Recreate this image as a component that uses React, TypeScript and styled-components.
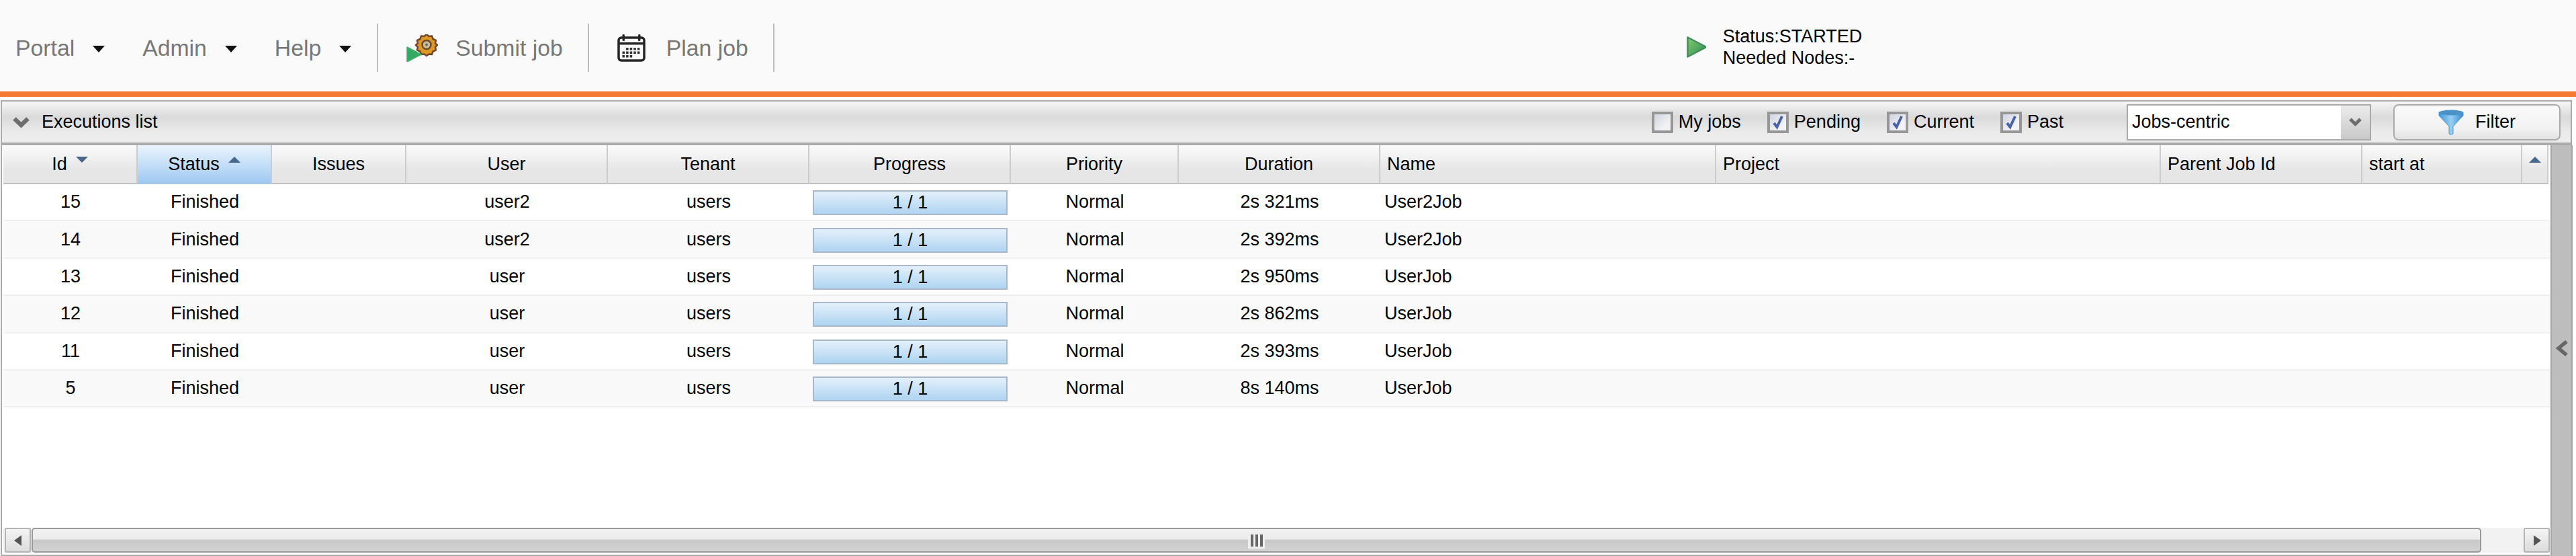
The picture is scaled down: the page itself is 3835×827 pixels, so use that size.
import { FC } from "react";
import styled, { createGlobalStyle } from "styled-components";

const GRID_COLUMNS = "200px 200px 200px 300px 300px 300px 250px 300px 500px 662px 300px 238px 39px";

const GlobalStyle = createGlobalStyle`
    html, body {
        margin: 0;
        padding: 0;
        background: #fff;
    }
    * {
        box-sizing: border-box;
    }
`;

type Job = { id: number; user: string; duration: string; name: string };

const jobs: Job[] = [
    { id: 15, user: "user2", duration: "2s 321ms", name: "User2Job" },
    { id: 14, user: "user2", duration: "2s 392ms", name: "User2Job" },
    { id: 13, user: "user", duration: "2s 950ms", name: "UserJob" },
    { id: 12, user: "user", duration: "2s 862ms", name: "UserJob" },
    { id: 11, user: "user", duration: "2s 393ms", name: "UserJob" },
    { id: 5, user: "user", duration: "8s 140ms", name: "UserJob" },
];

const PlayIcon: FC<{ width: number; height: number; id: string }> = ({ width, height, id }) => (
    <svg width={width} height={height} viewBox="0 0 29 32">
        <defs>
            <linearGradient id={id} x1="0" y1="0" x2="1" y2="1">
                <stop offset="0" stopColor="#86c873" />
                <stop offset="1" stopColor="#2a8f4e" />
            </linearGradient>
        </defs>
        <path d="M1.5 1.5 L27.5 15 Q28.5 16 27.5 17 L1.5 30.5 Z" fill={`url(#${id})`} stroke="#3f9058" strokeWidth="2.5" strokeLinejoin="round" />
    </svg>
);

const SubmitIcon: FC = () => (
    <svg width="47" height="41" viewBox="0 0 47 41">
        <path
            d="M30 0 L33.5 3 L38 2.5 L39.5 7 L44 9 L43 13.5 L46 16 L43 19 L44 23.5 L39.5 25.5 L38 30 L33.5 29.5 L30 32 L26.5 29.5 L22 30 L20.5 25.5 L16 23.5 L17 19 L14 16 L17 13.5 L16 9 L20.5 7 L22 2.5 L26.5 3 Z"
            fill="#dc9a22"
            stroke="#74452f"
            strokeWidth="2.5"
            strokeLinejoin="round"
        />
        <circle cx="30" cy="15.5" r="6.5" fill="#cdbd96" stroke="#6c4a34" strokeWidth="2.5" />
        <circle cx="30" cy="15.5" r="2" fill="#6f6a66" />
        <path d="M1 19 L22 30 L1 41 Z" fill="#35a862" stroke="#43b06e" strokeWidth="1.5" strokeLinejoin="round" />
    </svg>
);

const CalendarIcon: FC = () => (
    <svg width="42" height="41" viewBox="0 0 42 41">
        <rect x="2" y="5" width="38" height="34" rx="4" fill="#fafafa" stroke="#262626" strokeWidth="3.5" />
        <rect x="2" y="12" width="38" height="3.5" fill="#262626" />
        <rect x="7.5" y="0" width="3.5" height="10" rx="1.5" fill="#262626" />
        <rect x="31" y="0" width="3.5" height="10" rx="1.5" fill="#262626" />
        {[0, 1, 2].map(r =>
            [0, 1, 2, 3, 4].map(c =>
                r === 0 && c === 0 || r === 2 && c > 2 ? null : (
                    <rect key={`${r}-${c}`} x={7.5 + c * 5.6} y={20 + r * 5.5} width="3.5" height="3.5" fill="#333" />
                )
            )
        )}
    </svg>
);

const FunnelIcon: FC = () => (
    <svg width="38" height="38" viewBox="0 0 38 38">
        <defs>
            <linearGradient id="funnel" x1="0" y1="0" x2="1" y2="0">
                <stop offset="0" stopColor="#3f97d8" />
                <stop offset="0.5" stopColor="#97cff3" />
                <stop offset="1" stopColor="#3488cc" />
            </linearGradient>
        </defs>
        <path d="M1 4 L37 4 L37 9 L22 25 L22 36 Q19 39 16 36 L16 25 L1 9 Z" fill="url(#funnel)" stroke="#4c9bd4" strokeWidth="1" strokeLinejoin="round" />
        <ellipse cx="19" cy="4.5" rx="18" ry="4" fill="#4a93c8" />
    </svg>
);

const Chevron: FC<{ width: number; height: number }> = ({ width, height }) => (
    <svg width={width} height={height} viewBox="0 0 25 16">
        <path d="M2.5 2.5 L12.5 12 L22.5 2.5" fill="none" stroke="#6e6e6e" strokeWidth="6.5" />
    </svg>
);

const Caret: FC = () => (
    <svg width="18" height="10" viewBox="0 0 18 10">
        <path d="M0 0 H18 L9 10 Z" fill="#111" />
    </svg>
);

const SortArrow: FC<{ up?: boolean }> = ({ up }) => (
    <SortMark width="18" height="9" viewBox="0 0 18 9">
        <path d={up ? "M0 9 H18 L9 0 Z" : "M0 0 H18 L9 9 Z"} fill="#47688a" />
    </SortMark>
);

const FilterCheck: FC<{ label: string; checked?: boolean }> = ({ label, checked }) => (
    <CheckLabel>
        <CheckBox>
            {checked && (
                <svg width="18" height="22" viewBox="0 0 18 22">
                    <path d="M3 12 L7.5 18 L15 2" fill="none" stroke="#4a62a8" strokeWidth="4" />
                </svg>
            )}
        </CheckBox>
        {label}
    </CheckLabel>
);

export default function App() {
    return (
        <Page>
            <GlobalStyle />
            <Toolbar>
                <MenuItem>Portal<Caret /></MenuItem>
                <MenuItem>Admin<Caret /></MenuItem>
                <MenuItem>Help<Caret /></MenuItem>
                <Separator />
                <ToolButton $gap={26}><SubmitIcon />Submit job</ToolButton>
                <Separator />
                <ToolButton $gap={31}><CalendarIcon />Plan job</ToolButton>
                <Separator />
                <StatusBlock>
                    <PlayIcon width={29} height={32} id="statusPlay" />
                    <StatusText>
                        <div>Status:STARTED</div>
                        <div>Needed Nodes:-</div>
                    </StatusText>
                </StatusBlock>
            </Toolbar>
            <OrangeBar />
            <Panel>
                <PanelHeader>
                    <Chevron width={25} height={16} />
                    <PanelTitle>Executions list</PanelTitle>
                    <FilterGroup>
                        <FilterCheck label="My jobs" />
                        <FilterCheck label="Pending" checked />
                        <FilterCheck label="Current" checked />
                        <FilterCheck label="Past" checked />
                    </FilterGroup>
                    <Combo>
                        <ComboValue>Jobs-centric</ComboValue>
                        <ComboButton><Chevron width={19} height={13} /></ComboButton>
                    </Combo>
                    <FilterButton><FunnelIcon />Filter</FilterButton>
                </PanelHeader>
                <PanelBody>
                    <Grid>
                        <HeaderRow>
                            <HeaderCell>Id<SortArrow /></HeaderCell>
                            <HeaderCell $sorted>Status<SortArrow up /></HeaderCell>
                            <HeaderCell>Issues</HeaderCell>
                            <HeaderCell>User</HeaderCell>
                            <HeaderCell>Tenant</HeaderCell>
                            <HeaderCell>Progress</HeaderCell>
                            <HeaderCell>Priority</HeaderCell>
                            <HeaderCell>Duration</HeaderCell>
                            <HeaderCell $left>Name</HeaderCell>
                            <HeaderCell $left>Project</HeaderCell>
                            <HeaderCell $left>Parent Job Id</HeaderCell>
                            <HeaderCell $left>start at</HeaderCell>
                            <HeaderCell><SortArrow up /></HeaderCell>
                        </HeaderRow>
                        {jobs.map((job, index) => (
                            <Row key={job.id} $odd={index % 2 === 1}>
                                <Cell>{job.id}</Cell>
                                <Cell>Finished</Cell>
                                <Cell />
                                <Cell>{job.user}</Cell>
                                <Cell>users</Cell>
                                <Cell><ProgressBar>1 / 1</ProgressBar></Cell>
                                <Cell>Normal</Cell>
                                <Cell>{job.duration}</Cell>
                                <Cell $left>{job.name}</Cell>
                            </Row>
                        ))}
                        <GridFill />
                        <ScrollBar>
                            <ScrollButton>
                                <svg width="12" height="16" viewBox="0 0 12 16"><path d="M11 0 V16 L0 8 Z" fill="#555" /></svg>
                            </ScrollButton>
                            <ScrollThumb>
                                <Grip><GripLine /><GripLine /><GripLine /></Grip>
                            </ScrollThumb>
                            <ScrollTrack />
                            <ScrollButton>
                                <svg width="12" height="16" viewBox="0 0 12 16"><path d="M1 0 V16 L12 8 Z" fill="#555" /></svg>
                            </ScrollButton>
                        </ScrollBar>
                    </Grid>
                    <SideStrip>
                        <svg width="20" height="26" viewBox="0 0 20 26">
                            <path d="M17 3 L5 13 L17 23" fill="none" stroke="#666" strokeWidth="5.5" />
                        </svg>
                    </SideStrip>
                </PanelBody>
            </Panel>
        </Page>
    );
}

const Page = styled.div`
    width: 3835px;
    height: 827px;
    overflow: hidden;
    display: flex;
    flex-direction: column;
    font-family: "Liberation Sans", Arial, sans-serif;
    font-size: 27px;
    color: #000;
    background: #fff;
`;

const Toolbar = styled.div`
    height: 136px;
    flex: none;
    display: flex;
    align-items: center;
    padding: 6px 0 0 23px;
    background: #fafafa;
    color: #777;
    font-size: 33.75px;
`;

const MenuItem = styled.div`
    display: flex;
    align-items: center;
    gap: 27px;
    margin-right: 56px;

    &:nth-child(3) {
        margin-right: 38px;
    }

    svg {
        margin-top: 4px;
    }
`;

const Separator = styled.div`
    width: 2px;
    height: 72px;
    background: #bcbcbc;
    flex: none;
`;

const ToolButton = styled.div<{ $gap: number }>`
    display: flex;
    align-items: center;
    gap: ${props => props.$gap}px;
    margin: 0 37px 0 42px;
`;

const StatusBlock = styled.div`
    display: flex;
    align-items: center;
    gap: 25px;
    margin-left: 1358px;
    margin-top: -2px;
`;

const StatusText = styled.div`
    color: #000;
    font-size: 27px;
    line-height: 32.5px;
`;

const OrangeBar = styled.div`
    height: 8px;
    flex: none;
    background: #f47a33;
`;

const Panel = styled.div`
    flex: 1;
    min-height: 0;
    margin: 5px 6px 0 1px;
    display: flex;
    flex-direction: column;
    background: #fff;
`;

const PanelHeader = styled.div`
    height: 67px;
    flex: none;
    display: flex;
    align-items: center;
    padding: 0 15px 0 16px;
    border-top: 2px solid #aaa;
    border-left: 2px solid #aaa;
    border-right: 2px solid #aaa;
    border-bottom: 4px solid #aaa;
    background: linear-gradient(#f6f6f6, #dadada 38%, #ebebeb 75%, #ededed);
`;

const PanelTitle = styled.div`
    margin-left: 18px;
`;

const FilterGroup = styled.div`
    margin-left: auto;
    display: flex;
    align-items: center;
    gap: 39px;
`;

const CheckLabel = styled.label`
    display: flex;
    align-items: center;
    gap: 8px;
`;

const CheckBox = styled.span`
    width: 32px;
    height: 32px;
    display: flex;
    align-items: center;
    justify-content: center;
    border: 4px solid #979797;
    background: linear-gradient(135deg, #ced3e0, #f2f2f4 70%);
`;

const Combo = styled.div`
    width: 364px;
    height: 54px;
    margin-left: 94px;
    display: flex;
    border: 2px solid #aaa;
    background: #fff;
`;

const ComboValue = styled.div`
    flex: 1;
    display: flex;
    align-items: center;
    padding-left: 6px;
`;

const ComboButton = styled.div`
    width: 43px;
    display: flex;
    align-items: center;
    justify-content: center;
    background: linear-gradient(#ececec, #c8c8c8);
`;

const FilterButton = styled.div`
    width: 249px;
    height: 54px;
    margin-left: 33px;
    display: flex;
    align-items: center;
    justify-content: center;
    gap: 17px;
    border: 2px solid #aaa;
    border-radius: 8px;
    background: linear-gradient(#fafafa, #f1f1f1 70%, #e2e2e2);
`;

const PanelBody = styled.div`
    flex: 1;
    min-height: 0;
    display: flex;
    padding-bottom: 0;
`;

const Grid = styled.div`
    width: 3795px;
    flex: none;
    display: flex;
    flex-direction: column;
    padding-left: 2px;
    border-left: 2px solid #aaa;
    border-bottom: 2px solid #aaa;
`;

const HeaderRow = styled.div`
    height: 58px;
    flex: none;
    display: grid;
    grid-template-columns: ${GRID_COLUMNS};
`;

const HeaderCell = styled.div<{ $sorted?: boolean; $left?: boolean }>`
    display: flex;
    align-items: center;
    justify-content: ${props => props.$left ? "flex-start" : "center"};
    gap: 13px;
    padding-left: ${props => props.$left ? "10px" : "0"};
    border-right: 2px solid #cccccc;
    border-bottom: 2px solid ${props => props.$sorted ? "#a6c6e8" : "#c0c0c0"};
    background: ${props => props.$sorted
        ? "linear-gradient(#eaf4fd, #9fc9f2)"
        : "linear-gradient(#fbfbfb, #e6e6e6 65%)"};
`;

const SortMark = styled.svg`
    flex: none;
    margin-bottom: 14px;
`;

const Row = styled.div<{ $odd: boolean }>`
    height: 55.4px;
    flex: none;
    display: grid;
    grid-template-columns: ${GRID_COLUMNS};
    border-bottom: 2px solid #f0f0f0;
    background: ${props => props.$odd ? "#f9f9f9" : "#fff"};
`;

const Cell = styled.div<{ $left?: boolean }>`
    display: flex;
    align-items: center;
    justify-content: ${props => props.$left ? "flex-start" : "center"};
    padding-left: ${props => props.$left ? "6px" : "0"};
`;

const ProgressBar = styled.div`
    width: 290px;
    height: 37px;
    margin-top: 2px;
    display: flex;
    align-items: center;
    justify-content: center;
    border: 2px solid #a8b8ca;
    background: linear-gradient(#e4f0fb, #aed4f0);
`;

const GridFill = styled.div`
    flex: 1;
`;

const ScrollBar = styled.div`
    height: 37px;
    flex: none;
    margin-bottom: 3px;
    padding-left: 2px;
    display: flex;
    background: #f2f2f2;
`;

const ScrollButton = styled.div`
    width: 39px;
    flex: none;
    display: flex;
    align-items: center;
    justify-content: center;
    border: 2px solid #b4b4b4;
    border-radius: 3px;
    background: linear-gradient(#f4f4f4, #dcdcdc);
`;

const ScrollThumb = styled.div`
    width: 3647px;
    flex: none;
    margin-left: 1px;
    display: flex;
    align-items: center;
    justify-content: center;
    border: 2px solid #999;
    border-radius: 5px;
    background: linear-gradient(#f1f1f1, #ebebeb 45%, #c8c8c8 50%, #d2d2d2);
`;

const ScrollTrack = styled.div`
    flex: 1;
`;

const Grip = styled.div`
    width: 25px;
    height: 24px;
    display: flex;
    align-items: center;
    justify-content: center;
    gap: 3px;
    background: #efefef;
`;

const GripLine = styled.div`
    width: 4px;
    height: 18px;
    background: #666;
`;

const SideStrip = styled.div`
    width: 33px;
    flex: none;
    margin-left: 1px;
    padding-top: 289px;
    display: flex;
    justify-content: center;
    align-items: flex-start;
    border-left: 2px solid #a5a5a5;
    border-right: 2px solid #a5a5a5;
    background: #bdbdbd;
`;
